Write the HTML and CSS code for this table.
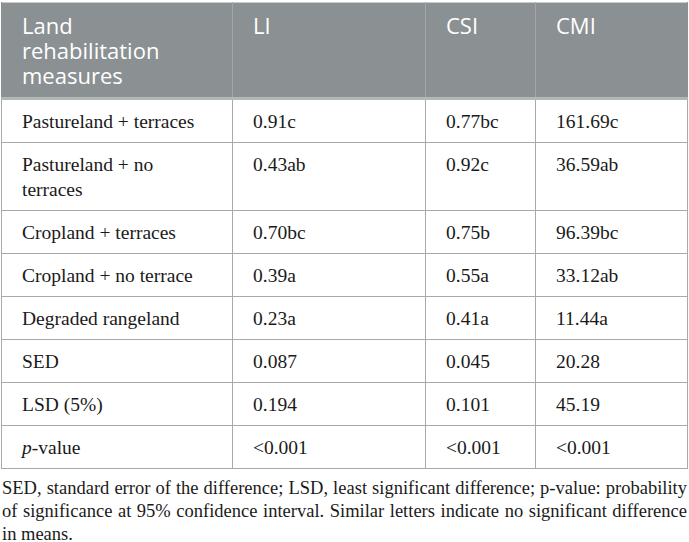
FILE: index.html
```html
<!DOCTYPE html>
<html>
  <head>
    <meta charset="UTF-8" />
    <title>Land rehabilitation measures</title>
    <link rel="stylesheet" href="styles.css">
  </head>
  <body>
    <div class="page">
      <table class="data">
        <colgroup>
          <col class="c-name" />
          <col class="c-li" />
          <col class="c-csi" />
          <col class="c-cmi" />
        </colgroup>
        <thead>
          <tr>
            <th>Land rehabilitation measures</th>
            <th>LI</th>
            <th>CSI</th>
            <th>CMI</th>
          </tr>
        </thead>
        <tbody>
          <tr><td>Pastureland + terraces</td><td>0.91c</td><td>0.77bc</td><td>161.69c</td></tr>
          <tr><td>Pastureland + no terraces</td><td>0.43ab</td><td>0.92c</td><td>36.59ab</td></tr>
          <tr><td>Cropland + terraces</td><td>0.70bc</td><td>0.75b</td><td>96.39bc</td></tr>
          <tr><td>Cropland + no terrace</td><td>0.39a</td><td>0.55a</td><td>33.12ab</td></tr>
          <tr><td>Degraded rangeland</td><td>0.23a</td><td>0.41a</td><td>11.44a</td></tr>
          <tr><td>SED</td><td>0.087</td><td>0.045</td><td>20.28</td></tr>
          <tr><td>LSD (5%)</td><td>0.194</td><td>0.101</td><td>45.19</td></tr>
          <tr><td><em>p</em>-value</td><td>&lt;0.001</td><td>&lt;0.001</td><td>&lt;0.001</td></tr>
        </tbody>
      </table>
      <p class="note">SED, standard error of the difference; LSD, least significant difference; p-value: probability of significance at 95% confidence interval. Similar letters indicate no significant difference in means.</p>
    </div>
  </body>
</html>
```

FILE: styles.css
```css
body {
	margin: 0;
	background: #ffffff;
}
.page {
	width: 687px;
	padding: 2px 0 0 1px;
}
.data {
	width: 686px;
	border-collapse: collapse;
	table-layout: fixed;
	border-top: 1px solid #c9cdc9;
}
.c-name { width: 231px; }
.c-li { width: 193px; }
.c-csi { width: 110px; }
.c-cmi { width: 152px; }

.data th {
	background: #8b9093;
	color: #ffffff;
	font-family: "Open Sans", "Noto Sans", sans-serif;
	font-weight: normal;
	font-size: 22px;
	line-height: 25px;
	text-align: left;
	vertical-align: top;
	padding: 10px 20px 9px 20px;
	border-left: 1px solid #a3a7a9;
	border-bottom: 3px solid #b3b7b8;
}
.data th:first-child { border-left: 1px solid #8b9093; }
.data th:last-child { border-right: 1px solid #8b9093; }

.data td {
	font-family: "Liberation Serif", "DejaVu Serif", serif;
	font-size: 19.5px;
	line-height: 25px;
	color: #1a1a1a;
	vertical-align: top;
	padding: 9px 20px 8px 20px;
	border: 1px solid #a9a9a9;
}
.note {
	margin: 8px 0 0 1px;
	width: 685px;
	font-family: "Liberation Serif", "DejaVu Serif", serif;
	font-size: 18.5px;
	line-height: 23px;
	color: #1a1a1a;
	text-align: justify;
}
```
